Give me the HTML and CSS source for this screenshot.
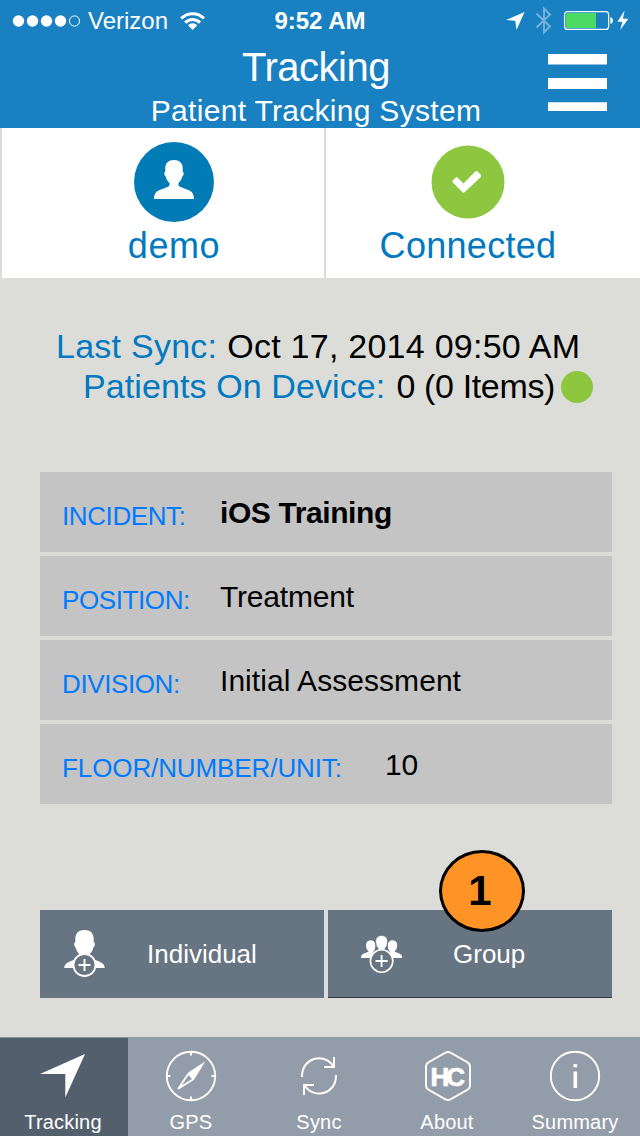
FILE: index.html
```html
<!DOCTYPE html>
<html lang="en">
<head>
<meta charset="utf-8">
<title>Patient Tracking System</title>
<link rel="stylesheet" href="styles.css">
</head>
<body>
<div class="app">
  <header class="header">
    <div class="status">
      <div class="status-left">
        <svg class="signal" width="70" height="14" viewBox="0 0 70 14"><g fill="#fff"><circle cx="6.5" cy="7" r="5.7"/><circle cx="20.5" cy="7" r="5.7"/><circle cx="34.5" cy="7" r="5.7"/><circle cx="48.5" cy="7" r="5.7"/></g><circle cx="62.5" cy="7" r="5.1" fill="none" stroke="#fff"/></svg>
        <span class="carrier">Verizon</span>
        <svg class="wifi" width="26" height="20" viewBox="180 10 26 20"><g fill="none" stroke="#fff" stroke-width="3"><path d="M181.2 17.4a16.2 16.2 0 0 1 22.8 0"/><path d="M185.2 21.6a10.4 10.4 0 0 1 14.8 0"/></g><path d="M188 24.3a6.4 6.4 0 0 1 9.2 0l-4.6 4.6z" fill="#fff"/></svg>
      </div>
      <span class="clock">9:52 AM</span>
      <svg class="status-right" width="134" height="32" viewBox="504 5 134 32">
        <path d="M506 20L524.500 12L516.500 30L515.300 20.700z" fill="#fff"/>
        <path d="M536.500 13.500L550 26.500L544 32.500V8.500L550 14.500L536.500 27.500" fill="none" stroke="#75b3db" stroke-width="1.900"/>
        <rect x="564.600" y="11.600" width="44" height="17.800" rx="3" fill="none" stroke="#fff" stroke-width="1.200"/>
        <path d="M567.500 13H596V28H567.500Q566 28 566 26.500V14.500Q566 13 567.500 13z" fill="#4cd964"/>
        <path d="M610.300 17q2.700.8 2.700 3.500t-2.700 3.500z" fill="#fff"/>
        <path d="M624.500 10.500L617.500 21.800H622.300L620.300 30L628.300 18.700H623z" fill="#fff"/>
      </svg>
    </div>
    <h1 class="title">Tracking</h1>
    <p class="subtitle">Patient Tracking System</p>
    <svg class="menu" width="59" height="58" viewBox="0 0 59 58"><path d="M0 0h59v10.600H0zM0 24h59v11H0zM0 48.200h59V57H0z" fill="#fff"/></svg>
  </header>

  <section class="cards">
    <div class="card card-user">
      <svg width="80" height="80" viewBox="134 142 80 80"><circle cx="174" cy="182" r="40" fill="#007bb5"/><path d="M174 160c5.500 0 8.700 3 8.700 8v3.500q1.400.5.900 3.200l-1.400 2c-.6 3-2 4.300-3.700 6.300v2.500c1 1.500 4 2.300 6.500 3.300 6 2 8.700 3.500 9 10.200h-40c.3-6.700 3-8.200 9-10.200 2.500-1 5.500-1.800 6.500-3.300v-2.500c-1.700-2-3.100-3.300-3.700-6.300l-1.400-2q-.5-2.700.9-3.200V168c0-5 3.200-8 8.700-8z" fill="#fff"/></svg>
      <span class="card-label user-label">demo</span>
    </div>
    <div class="card card-link">
      <svg width="80" height="80" viewBox="428 142 80 80"><circle cx="468" cy="182" r="36.500" fill="#8dc63f"/><path d="M452.800 182.600q-.9-1.100.1-2.100l2.600-2.700q1.100-1 2.200 0l5.800 5.600 11.800-11.800q1.200-1 2.300 0l3.200 3.200q1 1.200 0 2.300L464.600 192.300q-1.100.9-2.200 0z" fill="#fff"/></svg>
      <span class="card-label link-label">Connected</span>
    </div>
  </section>

  <section class="sync">
    <p class="sync-line last"><span class="key">Last Sync:</span><span>Oct 17, 2014 09:50 AM</span></p>
    <p class="sync-line patients"><span class="key">Patients On Device:</span><span class="count">0 (0 Items)</span><i class="dot"></i></p>
  </section>

  <section class="rows">
    <div class="row"><span class="label">INCIDENT:</span><span class="value strong">iOS Training</span></div>
    <div class="row"><span class="label">POSITION:</span><span class="value">Treatment</span></div>
    <div class="row"><span class="label">DIVISION:</span><span class="value assessment">Initial Assessment</span></div>
    <div class="row wide"><span class="label floor">FLOOR/NUMBER/UNIT:</span><span class="value">10</span></div>
  </section>

  <section class="actions">
    <div class="action individual">
      <svg width="44" height="50" viewBox="62 930 44 50"><path d="M84.500 931c5.700 0 9.200 3.200 9.200 9v3q1.500.5 1 3.800l-1.500 2.200c-.7 3-2 4.500-4 7v2c1 1.200 4 2 6 3 6 2 9.300 3.700 9.600 8H64.200c.3-4.300 3.600-6 9.600-8 2-1 5-1.800 6-3v-2c-2-2.500-3.300-4-4-7l-1.500-2.200q-.5-3.300 1-3.800v-3c0-5.800 3.500-9 9.200-9z" fill="#fff"/><circle cx="84.500" cy="966" r="11" fill="#677481" stroke="#fff" stroke-width="1.800"/><path d="M78.500 966h12M84.500 960v12" stroke="#fff" stroke-width="1.900"/></svg>
      <span>Individual</span>
    </div>
    <div class="action group">
      <svg width="44" height="42" viewBox="360 932 44 42"><g fill="#fff"><path d="M370.500 939.300c3.200 0 4.800 2.200 4.800 5.200q0 4.500-2 6.200v2.300l7 3v1H361q0-3.500 3.500-4.700l4-1.600V950.500q-2.500-2-2.500-6c0-3 1.500-5.200 4.500-5.200z"/><path d="M392.700 939.300c-3.200 0-4.800 2.200-4.800 5.200q0 4.500 2 6.200v2.300l-7 3v1H402.200q0-3.500-3.500-4.700l-4-1.600V950.500q2.500-2 2.500-6c0-3-1.500-5.200-4.500-5.200z"/><path d="M381.600 934.500c4 0 6 2.500 6 6.200q0 4.500-2.800 7.300v5h-6.400v-5q-2.800-2.800-2.800-7.300c0-3.700 2-6.200 6-6.200z" stroke="#677481" stroke-width=".8"/></g><circle cx="381.600" cy="960" r="11.200" fill="#677481" stroke="#fff" stroke-width="1.600"/><path d="M375.500 960h12.200M381.600 954v12" stroke="#fff" stroke-width="1.800"/></svg>
      <span>Group</span>
      <b class="badge">1</b>
    </div>
  </section>

  <nav class="tabs">
    <div class="tab active"><svg width="128" height="70" viewBox="0 1037 128 70"><path d="M85 1054L65.300 1097.500V1074H40z" fill="#fff"/></svg><span>Tracking</span></div>
    <div class="tab"><svg width="128" height="70" viewBox="127.500 1037 128 70"><g fill="none" stroke="#fff" stroke-width="1.900"><circle cx="190.500" cy="1076" r="24.200"/><path d="M190.500 1051v4.500M190.500 1096.500v4.500M166 1076h4M211 1076h4"/><path d="M188 1073.500L178 1088.500L193.500 1078.700" stroke-linejoin="round"/></g><path d="M204.700 1061.500L188 1072.300L187.500 1074.800L191.500 1079L194.300 1078.500z" fill="#fff"/></svg><span>GPS</span></div>
    <div class="tab"><svg width="128" height="70" viewBox="256 1037 128 70"><g fill="none" stroke="#fff" stroke-width="2"><path d="M302 1077C301.500 1057.500 324 1052 333.700 1066.500M324 1067H334V1057"/><path d="M336 1075C336.500 1094 314.500 1100 304.500 1085.500M314 1085H304V1095"/></g></svg><span>Sync</span></div>
    <div class="tab"><svg width="128" height="70" viewBox="384 1037 128 70"><path d="M445.500 1052.700q2.500-1.400 5 0l16.500 9.300q3 1.700 3 4.500v19q0 2.800-3 4.500l-16.500 9.300q-2.500 1.400-5 0l-16.500-9.300q-3-1.700-3-4.500v-19q0-2.800 3-4.500z" fill="none" stroke="#fff" stroke-width="1.900"/><text class="logo-text" x="430.500" y="1085.500">HC</text></svg><span>About</span></div>
    <div class="tab"><svg width="128" height="70" viewBox="511.500 1037 128 70"><circle cx="574.500" cy="1076" r="24.200" fill="none" stroke="#fff" stroke-width="1.900"/><path d="M573 1064h3.600v3.200H573zM573 1071.500h3.600V1088H573z" fill="#fff"/></svg><span>Summary</span></div>
  </nav>
</div>
</body>
</html>
```
FILE: styles.css
```css
* { box-sizing: border-box; margin: 0; padding: 0; }
body {
  width: 640px;
  height: 1136px;
  overflow: hidden;
  background: #dcddd9;
  color: #000;
  font-family: "Liberation Sans", Arial, sans-serif;
}
svg { display: block; flex: none; }
.app { display: flex; flex-direction: column; height: 1136px; }

.header { position: relative; height: 128px; background: #1981c2; color: #fff; text-align: center; }
.status {
  display: grid;
  grid-template-columns: 1fr auto 1fr;
  align-items: center;
  height: 42px;
  font-size: 24px;
  line-height: 42px;
}
.status-left { display: flex; align-items: center; padding-left: 12px; }
.carrier { width: 98px; padding-left: 6px; text-align: left; letter-spacing: 0; white-space: nowrap; }
.clock { font-weight: bold; }
.status-right { justify-self: end; margin-right: 2px; }
.title { font-size: 40px; font-weight: normal; line-height: 50px; letter-spacing: -0.5px; padding-right: 8px; }
.subtitle { font-size: 30px; line-height: 38px; letter-spacing: 0.3px; padding-right: 8px; }
.menu { position: absolute; left: 548px; top: 54px; }

.cards { display: grid; grid-template-columns: 322px 314px; column-gap: 2px; height: 150px; padding-left: 2px; }
.card { display: flex; flex-direction: column; align-items: center; padding-top: 14px; background: #fff; }
.card-user { padding-left: 22px; }
.card-link { padding-right: 30px; }
.card-label { font-size: 36px; line-height: 48px; color: #0079c1; letter-spacing: 0.3px; }
.user-label { letter-spacing: 0.6px; }

.sync { padding-top: 48px; font-size: 34px; line-height: 40px; white-space: nowrap; }
.sync-line { display: flex; align-items: center; height: 40px; gap: 10px; letter-spacing: 0.25px; }
.last { padding-left: 56px; }
.patients { padding-left: 83px; letter-spacing: 0.1px; gap: 11px; }
.key { color: #0079c1; }
.count { letter-spacing: -0.35px; }
.dot { width: 32px; height: 32px; margin: 1px 0 0 -5px; border-radius: 50%; background: #8dc63f; }

.rows { display: grid; row-gap: 4px; margin: 66px 28px 0 40px; }
.row { display: grid; grid-template-columns: 158px 1fr; align-items: center; height: 80px; padding-left: 22px; background: #c4c4c4; white-space: nowrap; }
.wide { grid-template-columns: 323px 1fr; }
.label { padding-top: 7px; font-size: 26px; line-height: 30px; color: #007aff; letter-spacing: -0.4px; }
.floor { letter-spacing: -0.1px; }
.value { padding-top: 2px; font-size: 30px; line-height: 34px; letter-spacing: -0.2px; }
.assessment { letter-spacing: 0.05px; }
.strong { font-weight: bold; letter-spacing: -0.4px; }

.actions { display: grid; grid-template-columns: 284px 284px; column-gap: 4px; margin: 106px 0 0 40px; }
.action { position: relative; display: flex; align-items: center; height: 88px; background: #677481; color: #fff; font-size: 26px; }
.individual { padding-left: 22px; gap: 41px; }
.group { padding-left: 32px; gap: 49px; box-shadow: inset 0 -1px #303a43; }
.badge {
  position: absolute;
  left: 111px;
  top: -60px;
  width: 86px;
  height: 82px;
  border: 3px solid #000;
  border-radius: 50%;
  background: #ff9326;
  color: #000;
  font-size: 42px;
  line-height: 76px;
  padding-right: 4px;
  text-align: center;
}

.tabs { display: grid; grid-template-columns: repeat(5, 128px); height: 99px; margin-top: auto; background: #939daa; color: #fff; font-size: 20px; letter-spacing: 0.2px; }
.tab { text-align: center; line-height: 30px; }
.tab span { display: block; padding-right: 2px; }
.active { background: #545f6d; box-shadow: inset 0 1px #8a929c; }
.logo-text { font: bold 26px "Liberation Sans", Arial, sans-serif; letter-spacing: -3px; fill: #fff; stroke: #fff; stroke-width: 0.7px; }
```
